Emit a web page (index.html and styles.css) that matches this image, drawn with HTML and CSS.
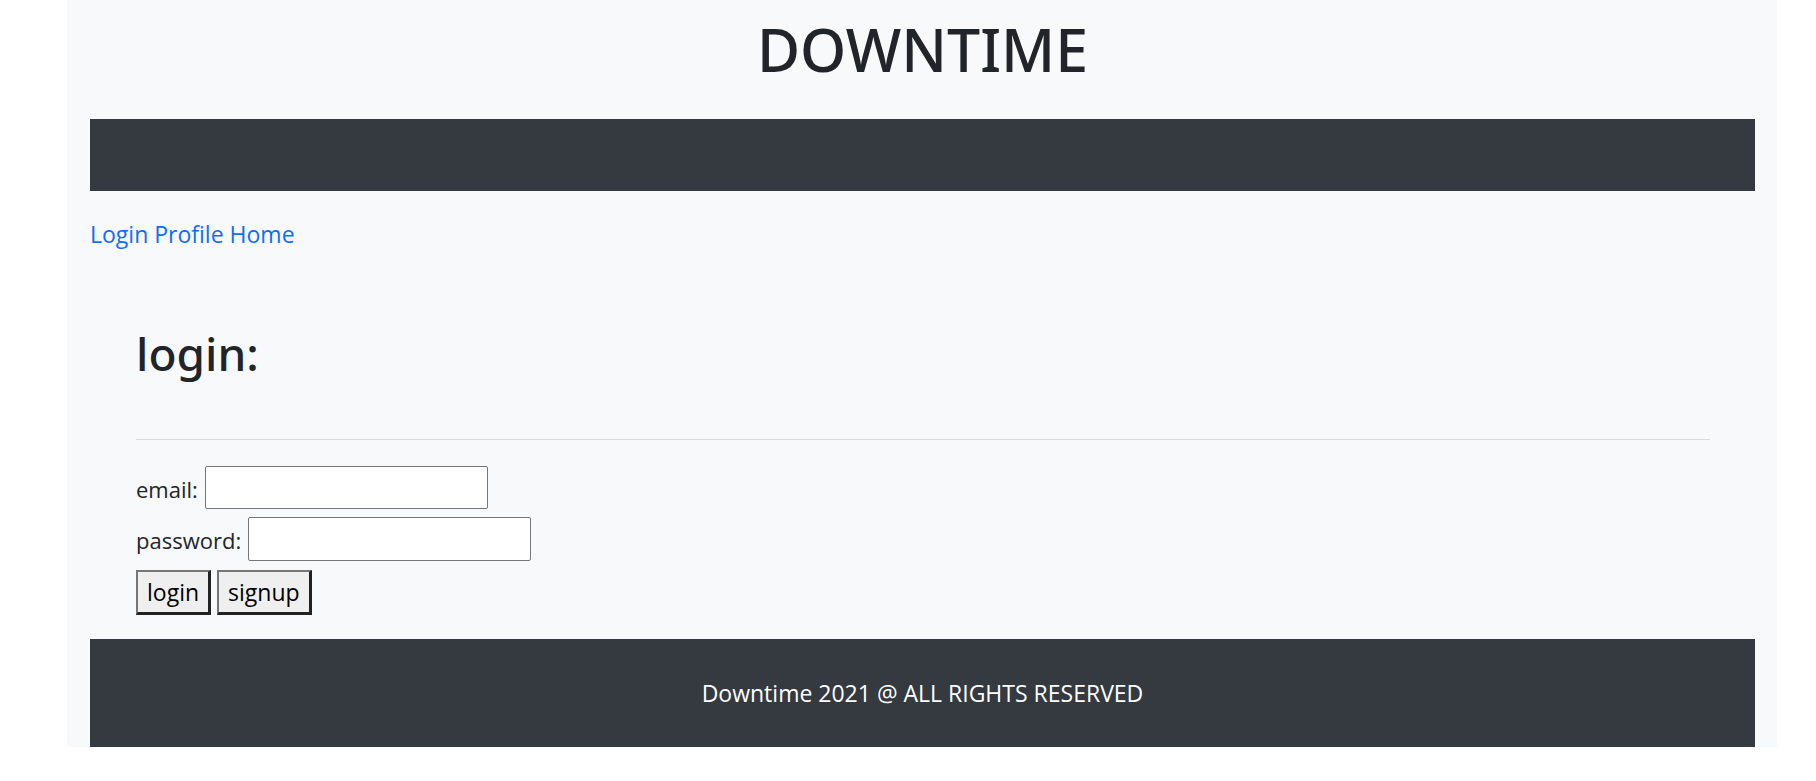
FILE: index.html
```html
<!DOCTYPE html>
<html lang="en">
<head>
<meta charset="utf-8">
<title>Downtime</title>
<link rel="stylesheet" href="styles.css">
</head>
<body>
<div class="page">
  <header class="brand"><h1 class="brand-title">DOWNTIME</h1></header>
  <nav class="topbar"></nav>
  <div class="links"><a href="#" class="link">Login</a> <a href="#" class="link">Profile</a> <a href="#" class="link">Home</a></div>
  <main class="content">
    <h2 class="page-title">login:</h2>
    <hr class="divider">
    <form class="login-form">
      <div class="row row-email"><label class="label">email:</label><input class="field" type="text"></div>
      <div class="row row-pass"><label class="label">password:</label><input class="field" type="password"></div>
      <div class="row row-buttons"><button class="btn" type="button">login</button><button class="btn" type="button">signup</button></div>
    </form>
  </main>
  <footer class="footer">Downtime 2021 @ ALL RIGHTS RESERVED</footer>
</div>
</body>
</html>
```

FILE: styles.css
```css
html, body {
  margin: 0;
  padding: 0;
  background: #ffffff;
}

body {
  font-family: "Open Sans", "Noto Sans", sans-serif;
  color: #212529;
  font-size: 23px;
}

.page {
  margin-left: 67px;
  width: 1710px;
  box-sizing: border-box;
  padding: 0 22px 0 23px;
  background: #f8f9fa;
}

.brand {
  padding-top: 13px;
  height: 106px;
  box-sizing: content-box;
  text-align: center;
}

.brand-title {
  margin: 0;
  font-family: "Noto Sans", "Open Sans", sans-serif;
  font-size: 59px;
  line-height: 72px;
  font-weight: 500;
  letter-spacing: 0;
}

.topbar {
  height: 72px;
  background: #343a40;
}

.links {
  margin-top: 25px;
  height: 35px;
  line-height: 36px;
  font-size: 23px;
}

.link {
  color: #0d6efd;
  text-decoration: none;
}

.content {
  padding: 73px 45px 0 46px;
}

.page-title {
  margin: 0;
  font-family: "Noto Sans", "Open Sans", sans-serif;
  font-size: 46px;
  line-height: 58px;
  font-weight: 500;
}

.divider {
  margin: 57px 0 26px 0;
  border: 0;
  height: 1px;
  background: #dadbdd;
}

.login-form {
  display: flex;
  flex-direction: column;
}

.row {
  display: flex;
  align-items: center;
  gap: 7px;
}

.row-pass {
  margin-top: 8px;
}

.row-buttons {
  margin-top: 9px;
  gap: 6px;
}

.label {
  line-height: 36px;
  font-size: 22px;
  padding-top: 2px;
}

.field {
  width: 283px;
  height: 43px;
  box-sizing: border-box;
  border: 1px solid #767676;
  border-radius: 2px;
  background: #ffffff;
  padding: 0 3px;
  font-family: inherit;
  font-size: 23px;
}

.row-pass .field {
  height: 44px;
}

.btn {
  height: 45px;
  box-sizing: border-box;
  padding: 0 9px;
  font-family: inherit;
  font-size: 23px;
  color: #000000;
  background: #efefef;
  border-style: solid;
  border-width: 2px 3px 3px 2px;
  border-color: #767676 #222222 #222222 #767676;
  border-radius: 0;
}

.footer {
  margin-top: 24px;
  height: 108px;
  background: #343a40;
  color: #ffffff;
  display: flex;
  align-items: center;
  justify-content: center;
  font-size: 23px;
}
```
